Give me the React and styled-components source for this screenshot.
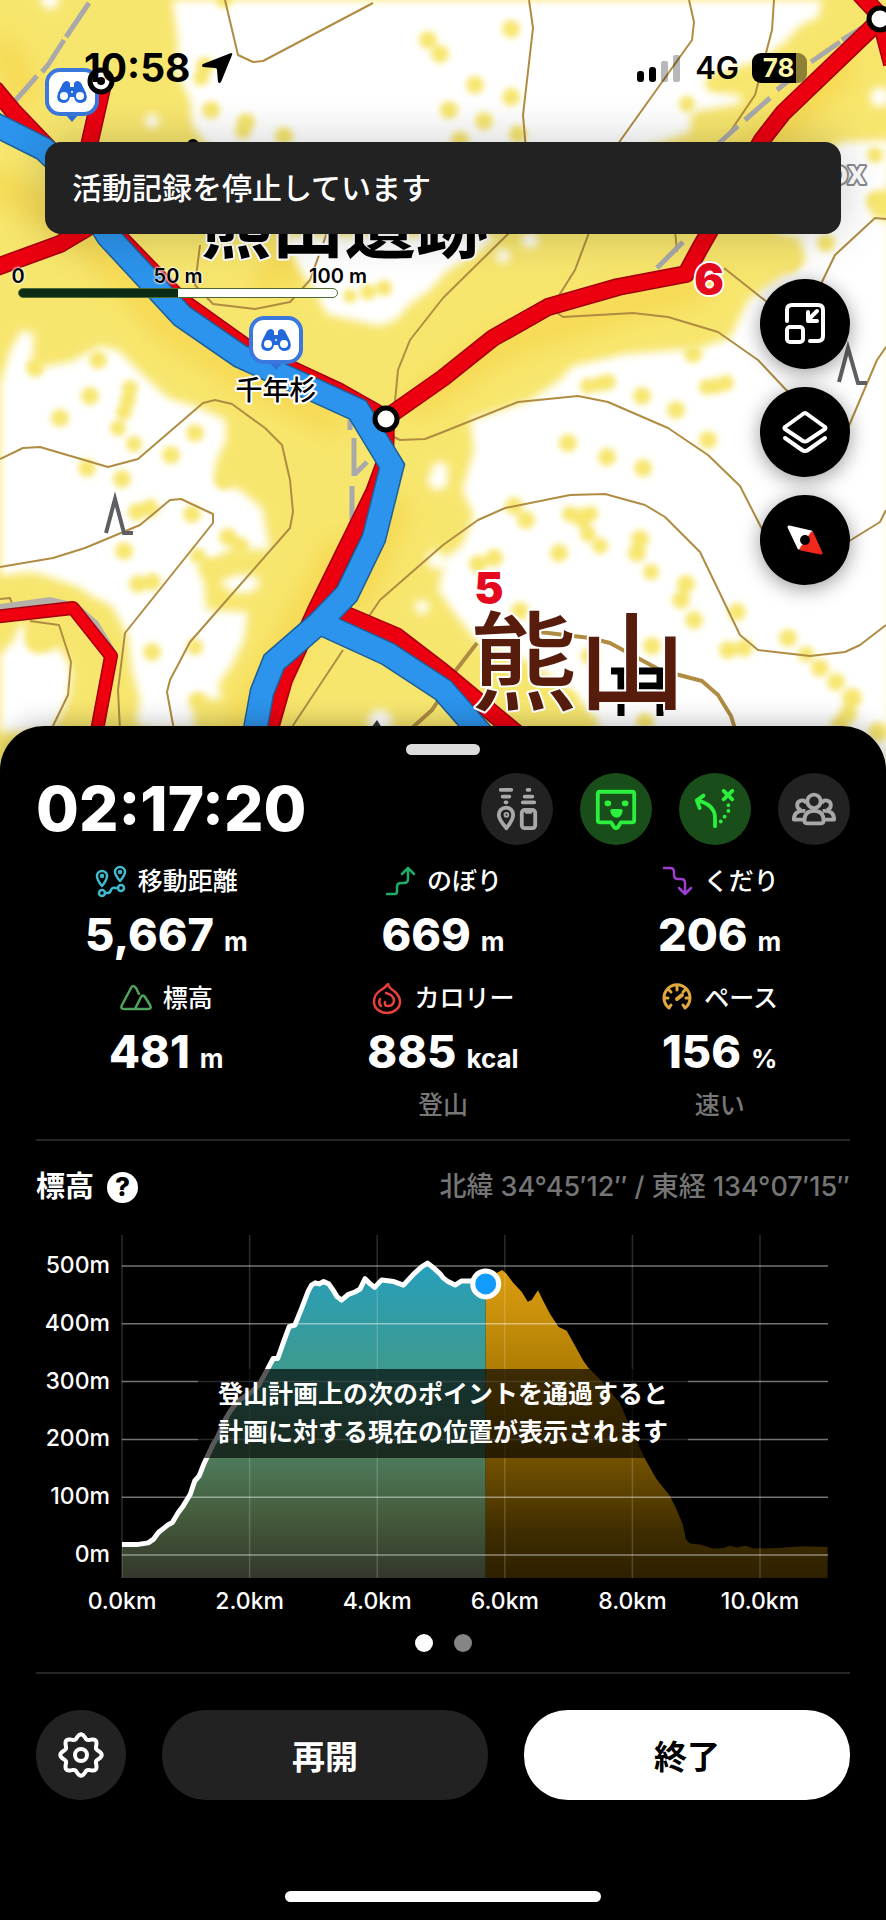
import React, { useState } from "react";
import styled, { createGlobalStyle } from "styled-components";

const GlobalStyle = createGlobalStyle`
  * {
    box-sizing: border-box;
  }
  body {
    margin: 0;
    background-color: #000;
    color: #fff;
    font-family: Inter, "Noto Sans CJK JP", sans-serif;
  }
  button {
    font-family: inherit;
    border: 0;
    padding: 0;
    cursor: pointer;
  }
`;

// elevation profile: [distance km, elevation m]
const walked = [
  [0, 18], [0.23, 18], [0.41, 21], [0.49, 27], [0.57, 39], [0.73, 53], [0.79, 56], [0.88, 73],
  [0.96, 85], [1.07, 105], [1.14, 128], [1.21, 137], [1.28, 157], [1.34, 171], [1.43, 192],
  [1.49, 203], [1.62, 235], [1.69, 248], [1.82, 267], [1.98, 278], [2.14, 293], [2.27, 319],
  [2.37, 340], [2.44, 340], [2.53, 368], [2.62, 395], [2.71, 398], [2.82, 428], [2.92, 457],
  [2.97, 467], [3.03, 471], [3.09, 469], [3.16, 473], [3.24, 469], [3.31, 458], [3.37, 447],
  [3.44, 441], [3.55, 451], [3.65, 455], [3.73, 460], [3.81, 478], [3.89, 469], [3.96, 463],
  [4.07, 476], [4.26, 473], [4.41, 467], [4.57, 486], [4.7, 499], [4.79, 505], [4.88, 497],
  [4.99, 486], [5.03, 480], [5.11, 473], [5.22, 467], [5.32, 474], [5.48, 474], [5.7, 469],
];
const planned = [
  [5.7, 471], [5.84, 486], [5.96, 493], [6.03, 486], [6.13, 471], [6.26, 456], [6.36, 438],
  [6.42, 441], [6.52, 458], [6.6, 440], [6.71, 417], [6.84, 395], [6.97, 388], [7.1, 362],
  [7.23, 336], [7.31, 324], [7.49, 304], [7.8, 264], [7.96, 223], [8.19, 168], [8.38, 131],
  [8.59, 102], [8.69, 79], [8.79, 53], [8.84, 27], [8.9, 20], [9.06, 18], [9.27, 11],
  [9.43, 12], [9.53, 16], [9.64, 13], [9.77, 16], [9.9, 11], [10.26, 12], [10.68, 15], [11.06, 14],
];

const chartLeft = 86;
const chartRight = 792;
const chartBottom = 344;
const toX = (km) => Math.round((chartLeft + km * 63.8) * 10) / 10;
const toY = (m) => Math.round((321 - m * 0.578) * 10) / 10;
const toLine = (points) => points.map(([km, m]) => `${toX(km)},${toY(m)}`).join(" L");
const toArea = (points) =>
  `M${toX(points[0][0])},${chartBottom} L${toLine(points)} L${toX(
    points[points.length - 1][0]
  )},${chartBottom} Z`;

const gearPath =
  Array.from({ length: 96 }, (_, i) => {
    const a = (i / 96) * Math.PI * 2;
    const r = 18.5 + 2.2 * Math.cos(a * 8);
    return `${i ? "L" : "M"}${(24 + r * Math.sin(a)).toFixed(1)} ${(24 - r * Math.cos(a)).toFixed(1)}`;
  }).join(" ") + " Z";

const contours = [
  "M225 0 238 55 253 62 263 61 373 3",
  "M529 0 533 28 523 115 526 150",
  "M689 0 694 22 692 40 615 148",
  "M774 0 772 30 755 95 730 132",
  "M200 245 195 285 213 304 255 309 290 302 310 280 328 230",
  "M512 230 443 298 410 340 398 370 394 412",
  "M590 230 575 270 558 297",
  "M556 312 563 317 633 313 668 317 718 332 758 360 790 394",
  "M675 230 677 252",
  "M724 268 772 306",
  "M886 219 875 218 835 255 820 286",
  "M394 437 400 440 425 439 443 432 518 402 578 396 608 402 668 428 708 455 740 486 765 535",
  "M886 347 877 360 848 428",
  "M290 730 343 650",
  "M365 622 380 600 443 545 478 520 505 508 570 495 605 494 645 505 665 517 700 552 740 635 758 650 810 656 845 652 860 645 886 625",
  "M886 510 880 522 846 543",
  "M0 459 23 448 40 447 108 467 138 459 203 403 215 400 232 404 265 428 282 445 290 480 293 512 290 528 190 642 170 680 167 692 174 730",
  "M0 567 53 558 85 548 140 525 170 500 181 499 213 514 213 523 125 633 118 690 120 730",
  "M0 599 10 598 13 606",
  "M30 621 59 625 71 662 68 695 50 732",
];

// bare ground patches on the forest layer
const clearings = [
  "M172 0 L178 40 176 70 190 100 192 125 210 150 640 150 690 132 692 112 740 104 742 96 706 90 706 78 760 60 785 42 802 24 818 18 822 0 Z",
  "M840 142 L890 140 890 186 868 200 872 216 890 222 890 770 604 770 598 720 570 690 530 662 480 645 452 610 438 590 446 558 462 545 474 515 462 490 474 450 470 420 530 400 560 380 572 366 625 354 700 348 730 338 748 300 776 280 806 262 800 238 776 232 790 180 Z",
  "M0 385 L10 350 22 330 34 334 32 368 70 362 100 346 118 350 140 372 168 398 200 408 226 420 226 440 216 462 214 480 240 490 262 508 270 550 232 548 196 568 204 580 206 610 248 612 244 640 232 665 218 684 222 700 190 696 196 730 150 730 136 724 140 700 132 670 128 636 112 606 92 596 76 586 40 574 28 572 0 576 Z",
  "M0 655 L14 640 22 620 28 640 44 652 60 648 72 670 68 700 52 732 0 732 Z",
  "M284 236 L498 236 478 252 446 272 430 290 410 304 396 320 380 326 352 320 326 314 316 292 300 270 Z",
  "M220 582 Q240 570 258 578 Q262 588 250 592 Q230 596 220 582 Z",
];
const whiteSpots = [
  [152, 121, 7], [422, 607, 7], [50, 0, 9], [880, 97, 10], [530, 240, 8], [503, 256, 7],
  [380, 722, 12], [20, 440, 8], [438, 480, 10], [436, 560, 9], [440, 470, 8],
];
const trees = [
  [211, 110, 9], [246, 122, 9], [243, 131, 8], [284, 136, 9], [205, 66, 9], [201, 78, 8],
  [428, 40, 9], [440, 54, 9], [511, 29, 9], [475, 85, 9], [511, 97, 9], [449, 110, 9],
  [484, 121, 9], [518, 134, 9], [460, 140, 9], [687, 104, 8], [718, 82, 8], [224, 0, 8],
  [35, 368, 9], [98, 360, 9], [90, 396, 9], [60, 418, 9], [130, 388, 8], [128, 400, 8],
  [124, 412, 8], [118, 428, 8], [134, 444, 8], [195, 433, 9], [171, 455, 9], [87, 468, 9],
  [122, 479, 9], [137, 512, 9], [150, 508, 9], [192, 514, 9], [224, 481, 9], [228, 537, 9],
  [240, 546, 9], [124, 551, 9], [138, 584, 9], [152, 582, 9], [198, 556, 8], [210, 566, 8],
  [152, 652, 9], [195, 647, 8], [38, 640, 13], [198, 700, 8], [588, 386, 8], [600, 384, 8],
  [608, 382, 8], [642, 396, 9], [676, 410, 9], [707, 387, 8], [716, 386, 8], [726, 383, 8],
  [708, 440, 9], [568, 443, 9], [607, 457, 9], [643, 468, 9], [693, 354, 9], [514, 506, 9],
  [526, 520, 9], [570, 514, 8], [582, 518, 10], [590, 514, 8], [588, 534, 8], [600, 546, 8],
  [559, 553, 9], [640, 539, 9], [637, 553, 9], [651, 572, 8], [478, 564, 9], [494, 558, 9],
  [520, 611, 9], [686, 584, 9], [681, 600, 9], [694, 620, 9], [737, 612, 9], [652, 646, 9],
  [728, 650, 9], [744, 648, 9], [788, 638, 9], [806, 654, 8], [820, 668, 9], [836, 682, 9],
  [852, 698, 10], [848, 714, 9], [840, 724, 9], [878, 732, 10], [645, 722, 9], [876, 200, 9],
  [875, 155, 8], [826, 243, 9], [790, 262, 10], [368, 292, 8], [384, 288, 8], [350, 296, 7],
  [590, 656, 9], [568, 700, 9],
];

const redRoutes = [
  "M-6 88 14 112 60 160 118 236 180 300 250 350 340 392 386 418",
  "M103 84 88 150 92 225 60 244 -6 268",
  "M386 418 443 378 493 338 548 307 618 287 686 274 700 248 762 140 783 113 882 18 858 -8",
  "M880 18 892 64",
  "M386 418 385 462 374 492 316 610 284 680 268 736",
  "M330 608 396 636 443 672 520 736",
];
const blueRoutes = [
  "M-6 124 44 149 72 176 108 236 182 316 240 356 358 410 392 466 374 538 347 594 320 622 274 662 262 692 254 736",
  "M318 622 388 654 443 690 492 746",
];

const BinocularPin = ({ x, y }) => (
  <g transform={`translate(${x} ${y})`}>
    <path d="M20 46h14l-7 8z" fill="#2e71da" />
    <rect x="2" y="2" width="50" height="44" rx="13" fill="#fff" stroke="#3a78dd" strokeWidth="4" />
    <path
      d="M18 15q4-4 7 0v4h4v-4q3-4 7 0l5 10q3 9-5 10-6 0-7-6h-4q-1 6-7 6-8-1-5-10z"
      fill="#2368dc"
    />
    <circle cx="19" cy="28" r="4" fill="#fff" />
    <circle cx="35" cy="28" r="4" fill="#fff" />
    <circle cx="27" cy="24" r="1" fill="#fff" />
  </g>
);

const MapDrawing = () => (
  <MapCanvas viewBox="0 0 886 770" preserveAspectRatio="xMidYMin slice" aria-hidden="true">
    <defs>
      <filter id="soft" x="-10%" y="-10%" width="120%" height="120%">
        <feGaussianBlur stdDeviation="4" />
      </filter>
      <filter id="spot" x="-10%" y="-10%" width="120%" height="120%">
        <feGaussianBlur stdDeviation="3" />
      </filter>
      <filter id="wide" x="-20%" y="-20%" width="140%" height="140%">
        <feGaussianBlur stdDeviation="14" />
      </filter>
    </defs>
    <rect width="886" height="770" fill="#f7e66e" />
    <g filter="url(#wide)" fill="none" stroke="#f6cf3c" strokeWidth="22" opacity="0.8">
      <path d="M-10 180 80 230 170 330 250 380 345 425" />
      <path d="M410 410 500 345 640 300 710 285" />
      <path d="M345 540 290 640 240 730M400 500 350 610" />
      <path d="M0 40 30 100M850 60 740 170" />
      <path d="M300 250 260 290" />
    </g>
    <g fill="#fff" filter="url(#soft)">
      {clearings.map((d) => (
        <path key={d} d={d} />
      ))}
      {whiteSpots.map(([cx, cy, r]) => (
        <circle key={`${cx}-${cy}`} cx={cx} cy={cy} r={r} />
      ))}
    </g>
    <g fill="#f7e66e" filter="url(#spot)">
      {trees.map(([cx, cy, r]) => (
        <circle key={`${cx}-${cy}`} cx={cx} cy={cy} r={r} />
      ))}
    </g>
    <g fill="none" stroke="#b08c42" strokeWidth="2" strokeLinejoin="round">
      {contours.map((d) => (
        <path key={d} d={d} />
      ))}
      <path d="M450 678 477 643M540 632 590 638 610 643 660 670 683 676 702 681 718 695 731 716 736 732" strokeWidth="4" />
      <path d="M440 698 432 710 412 728" strokeWidth="4" />
    </g>
    <g fill="none" stroke="#a9a9a9" strokeWidth="5">
      <path d="M89 3 66 37M64 40 48 65 42 72M37 76 15 101" />
      <path d="M862 28 842 40M840 42 811 62M803 69 777 90M770 98 745 120M738 126 718 144" />
      <path d="M683 242 657 268M350 420v10M354 438v38M352 486v38M355 474l12-12" />
      <path d="M0 608 50 601 75 607 95 624 112 652" stroke="#b5b0a8" strokeWidth="8" />
    </g>
    <g fill="none" strokeLinejoin="round">
      <path d="M-6 617 73 608 111 656 96 736" stroke="#a3000d" strokeWidth="14" />
      <path d="M-6 617 73 608 111 656 96 736" stroke="#f0000f" strokeWidth="11" />
      {redRoutes.map((d) => (
        <path key={d} d={d} stroke="#a3000d" strokeWidth="18" />
      ))}
      {redRoutes.map((d) => (
        <path key={d} d={d} stroke="#ec0010" strokeWidth="15" />
      ))}
      {blueRoutes.map((d) => (
        <path key={d} d={d} stroke="#1d5f96" strokeWidth="25" strokeLinejoin="miter" />
      ))}
      {blueRoutes.map((d) => (
        <path key={d} d={d} stroke="#2c94ec" strokeWidth="22" strokeLinejoin="miter" />
      ))}
    </g>
    <g fill="none" stroke="#5f5f63" strokeWidth="4">
      <path d="M106 533 115 499 124 533H133" />
      <path d="M839 382 848 348 858 383H867" />
    </g>
    <path d="M611 671h55M618 686h44M621 670v46M660 670v46" stroke="#000" strokeWidth="7" />
    <path d="M371 728l6-8 5 8z" fill="#333" />
    <g stroke="#000" strokeWidth="5" fill="#fff">
      <circle cx="386" cy="419" r="11" />
      <circle cx="880" cy="19" r="11" />
    </g>
    <BinocularPin x={45} y={68} />
    <circle cx="101" cy="81" r="11" fill="#fff" stroke="#000" strokeWidth="5" />
    <circle cx="101" cy="81" r="4" />
    <BinocularPin x={249} y={316} />
    <circle cx="193" cy="145" r="6" />
    <MapLabel x="344" y="252" $size={72} $weight={700}>熊山遺跡</MapLabel>
    <MapLabel x="276" y="400" $size={27} $weight={500}>千年杉</MapLabel>
    <MapLabel x="709" y="295" $size={44} $weight={900} $color="#e60a1e">6</MapLabel>
    <MapLabel x="489" y="604" $size={44} $weight={900} $color="#e60a1e">5</MapLabel>
    <MapLabel x="578" y="702" $size={108} $weight={500} $color="#571c0c">熊山</MapLabel>
    <MapLabel x="866" y="184" $size={32} $weight={700} $color="#fff" $halo="#8b8b90">mapbox</MapLabel>
  </MapCanvas>
);

const tools = [
  {
    label: "地図を縮小",
    icon: (
      <g fill="none" stroke="#fff" strokeWidth="4" strokeLinecap="round" strokeLinejoin="round">
        <path d="M6 21V10q0-5 5-5h26q5 0 5 5v26q0 5-5 5H29" />
        <rect x="6" y="27" width="16" height="15" rx="3" />
        <path d="M36 11l-9 9M27 12v9h9" />
      </g>
    ),
  },
  {
    label: "レイヤー",
    icon: (
      <g fill="none" stroke="#fff" strokeWidth="4" strokeLinecap="round" strokeLinejoin="round">
        <path d="M22 6q2-2 4 0l18 13q1 1 0 2L26 33q-2 1-4 0L4 21q-1-1 0-2z" />
        <path d="M4 30l17 12q3 2 6 0l17-12" />
      </g>
    ),
  },
  {
    label: "コンパス",
    icon: (
      <g strokeWidth="3" strokeLinejoin="round">
        <path d="M30 16 8 11 18 32z" fill="#fff" stroke="#fff" />
        <path d="M31 17 40 37 20 33z" fill="#f2281c" stroke="#f2281c" />
        <circle cx="24" cy="24" r="5" />
      </g>
    ),
  },
];

const shortcuts = [
  {
    label: "持ち物",
    icon: (
      <g fill="none" stroke="currentColor" strokeWidth="4" strokeLinecap="round" strokeLinejoin="round">
        <path d="M8 4h11M10 11h7M13 17h1M36 4h2M33 11h8M31 17h12" />
        <path d="M14 44q-8-9-8-14a7 7 0 0 1 15 0q0 5-7 14z" />
        <circle cx="14" cy="30" r="1" />
        <rect x="30" y="25" width="14" height="19" rx="3" />
        <path d="M35 27h4" />
      </g>
    ),
  },
  {
    label: "みまもり",
    active: true,
    icon: (
      <g fill="none" stroke="currentColor" strokeWidth="4" strokeLinecap="round" strokeLinejoin="round">
        <path d="M8 6h34q2 0 2 2v28q0 2-2 2H30l-3 5q-2 2-4 0l-3-5H8q-2 0-2-2V8q0-2 2-2z" />
        <path d="M16 18h1M34 18h1" strokeWidth="6" />
        <path d="M21 26h9q-1 5-4 5-4 0-5-5z" fill="currentColor" />
      </g>
    ),
  },
  {
    label: "ルート逸脱",
    active: true,
    icon: (
      <g fill="none" stroke="currentColor" strokeWidth="4" strokeLinecap="round">
        <path d="M25 42V33Q25 20 7 15M13 10 6 15l3 8" strokeLinejoin="round" />
        <path d="M34 5l9 9M43 5l-9 9" />
        <path d="M39 20h0M39 26h0M35 32h0M31 37h0" />
      </g>
    ),
  },
  {
    label: "メンバー",
    icon: (
      <g fill="none" stroke="currentColor" strokeWidth="4">
        <circle cx="25" cy="16" r="7" />
        <path d="M15 36q0-10 10-10t10 10q0 3-3 3H18q-3 0-3-3z" />
        <path d="M17 18a5 5 0 1 0-5 7M33 18a5 5 0 1 1 5 7" />
        <path d="M16 26q-12-1-12 9h10M34 26q12-1 12 9H36" strokeLinejoin="round" />
      </g>
    ),
  },
];

const stats = [
  {
    label: "移動距離",
    value: "5,667",
    unit: "m",
    color: "#41b9cf",
    icon: (
      <>
        <path d="M7 21Q2 15 2 11a5 5 0 0 1 10 0q0 4-5 10zM25 16q-5-6-5-9a5 5 0 0 1 10 0q0 3-5 9z" />
        <circle cx="7" cy="11" r="1" />
        <circle cx="25" cy="7" r="1" />
        <circle cx="7" cy="28" r="3" />
        <circle cx="26" cy="23" r="3" />
        <path d="M10 28h3q2 0 3-3t4-2h3" />
      </>
    ),
  },
  {
    label: "のぼり",
    value: "669",
    unit: "m",
    color: "#1fae6a",
    icon: <path d="M3 29h8q2 0 2-3v-4q0-4 4-4h3q4 0 4-4V4M18 9l6-6 6 6" />,
  },
  {
    label: "くだり",
    value: "206",
    unit: "m",
    color: "#9c3fd0",
    icon: <path d="M3 3h6q4 0 4 4v3q0 4 4 4h3q4 0 4 4v11M18 23l6 6 6-6" />,
  },
  {
    label: "標高",
    value: "481",
    unit: "m",
    color: "#4fa35c",
    icon: (
      <path d="M15 27H4q-4 0-2-4L11 6q2-4 5 0l3 6M15 27l6-12q2-3 4 0l5 8q2 4-2 4H15" />
    ),
  },
  {
    label: "カロリー",
    value: "885",
    unit: "kcal",
    note: "登山",
    color: "#e8403a",
    icon: (
      <>
        <path d="M17 2Q18 6 23 9 29 14 29 20A13 11 0 0 1 3 20Q3 12 10 8 15 5 17 2Z" />
        <path d="M15 11q8 2 8 8-1 5-6 5-4 0-3-4M9 17q-2 4 1 7" />
      </>
    ),
  },
  {
    label: "ペース",
    value: "156",
    unit: "%",
    note: "速い",
    color: "#e0a83e",
    icon: (
      <>
        <path d="M8 26a13 13 0 1 1 16 0M8 26l2-3M24 26l-2-3" strokeWidth="3" />
        <path d="M16 4v4M8 8l2 2M24 8l-2 2M4 16h3M28 16h-3" strokeWidth="3" />
        <path d="M16 17l5-4" strokeWidth="4" />
      </>
    ),
  },
];

const StatItem = ({ item }) => (
  <Stat>
    <StatLabel>
      <svg
        width="32"
        height="32"
        viewBox="0 0 32 32"
        fill="none"
        stroke={item.color}
        strokeWidth="2.5"
        strokeLinecap="round"
        strokeLinejoin="round"
      >
        {item.icon}
      </svg>
      {item.label}
    </StatLabel>
    <StatValue>
      {item.value}
      <Unit>{item.unit}</Unit>
    </StatValue>
    {item.note && <Note>{item.note}</Note>}
  </Stat>
);

const ElevationChart = () => (
  <ChartWrap>
    <ChartSvg viewBox="0 0 814 396" role="img" aria-label="標高グラフ">
      <defs>
        <linearGradient id="walkedFill" gradientUnits="userSpaceOnUse" x1="0" y1="30" x2="0" y2="344">
          <stop offset="0" stopColor="#279fbb" />
          <stop offset="0.33" stopColor="#3d9a8f" />
          <stop offset="0.62" stopColor="#4d7a5b" />
          <stop offset="0.8" stopColor="#455c3c" />
          <stop offset="1" stopColor="#33372b" />
        </linearGradient>
        <linearGradient id="planFill" gradientUnits="userSpaceOnUse" x1="0" y1="30" x2="0" y2="344">
          <stop offset="0" stopColor="#dfa011" />
          <stop offset="0.33" stopColor="#b07e04" />
          <stop offset="0.62" stopColor="#745200" />
          <stop offset="0.85" stopColor="#3f2d00" />
          <stop offset="1" stopColor="#2e2000" />
        </linearGradient>
      </defs>
      <path d={toArea(walked)} fill="url(#walkedFill)" />
      <path d={toArea(planned)} fill="url(#planFill)" />
      {[500, 400, 300, 200, 100, 0].map((m) => (
        <g key={m}>
          <path d={`M${chartLeft} ${toY(m)}H${chartRight}`} stroke="#fff" strokeOpacity="0.45" strokeWidth="1.5" />
          <AxisText x="74" y={toY(m) + 7} textAnchor="end">
            {m}m
          </AxisText>
        </g>
      ))}
      {[0, 2, 4, 6, 8, 10].map((km) => (
        <g key={km}>
          <path d={`M${toX(km)} 1V${chartBottom}`} stroke="#fff" strokeOpacity="0.17" strokeWidth="1.5" />
          <AxisText x={toX(km)} y="375" textAnchor="middle">
            {km.toFixed(1)}km
          </AxisText>
        </g>
      ))}
      <path d={`M${toLine(walked)}`} fill="none" stroke="#fff" strokeWidth="5" strokeLinejoin="round" />
      <circle cx={toX(5.7)} cy={toY(469)} r="13" fill="#129bfb" stroke="#fff" strokeWidth="5" />
    </ChartSvg>
    <ChartMessage>
      登山計画上の次のポイントを通過すると
      <br />
      計画に対する現在の位置が表示されます
    </ChartMessage>
  </ChartWrap>
);

export default function App() {
  const [page, setPage] = useState(0);

  return (
    <Screen>
      <GlobalStyle />
      <MapArea>
        <MapDrawing />
        <MapOverlay>
          <StatusBar>
            <Clock>
              10:58
              <svg width="34" height="34" viewBox="0 0 34 34">
                <path d="M31 2q2 0 1 2L21 31q-2 2-3 0l-1-12q0-2-2-2L3 16q-2-1 0-3z" />
              </svg>
            </Clock>
            <Signals>
              <svg width="46" height="30" viewBox="0 0 46 30">
                <rect x="1" y="18" width="7" height="11" rx="3" />
                <rect x="13" y="14" width="7" height="15" rx="3" />
                <rect x="25" y="8" width="7" height="21" rx="2" opacity="0.28" />
                <rect x="37" y="2" width="7" height="27" rx="2" opacity="0.28" />
              </svg>
              4G
              <Battery>78</Battery>
            </Signals>
          </StatusBar>
          <Toast role="status">活動記録を停止しています</Toast>
          <MapTools>
            <Scale>
              <ScaleLabels>
                <span>0</span>
                <span>50 m</span>
                <span>100 m</span>
              </ScaleLabels>
              <ScaleBar />
            </Scale>
            <ToolColumn>
              {tools.map((tool) => (
                <ToolButton key={tool.label} aria-label={tool.label}>
                  <svg width="48" height="48" viewBox="0 0 48 48">
                    {tool.icon}
                  </svg>
                </ToolButton>
              ))}
            </ToolColumn>
          </MapTools>
        </MapOverlay>
      </MapArea>
      <Sheet>
        <Handle />
        <TimerRow>
          <Timer>02:17:20</Timer>
          <Shortcuts>
            {shortcuts.map((item) => (
              <Shortcut key={item.label} aria-label={item.label} $active={item.active}>
                <svg width="48" height="46" viewBox="0 0 50 48">
                  {item.icon}
                </svg>
              </Shortcut>
            ))}
          </Shortcuts>
        </TimerRow>
        <StatGrid>
          {stats.map((item) => (
            <StatItem key={item.label} item={item} />
          ))}
        </StatGrid>
        <Divider />
        <ChartHeader>
          <ChartTitle>
            標高
            <HelpButton aria-label="ヘルプ">?</HelpButton>
          </ChartTitle>
          <Position>北緯 34°45′12″ / 東経 134°07′15″</Position>
        </ChartHeader>
        <ElevationChart />
        <Dots>
          {[0, 1].map((i) => (
            <Dot key={i} aria-label={`${i + 1}`} $active={page === i} onClick={() => setPage(i)} />
          ))}
        </Dots>
        <Divider />
        <Actions>
          <SettingsButton aria-label="設定">
            <svg width="48" height="48" viewBox="0 0 48 48" fill="none" stroke="#fff" strokeWidth="4">
              <path d={gearPath} strokeLinejoin="round" />
              <circle cx="24" cy="24" r="6" />
            </svg>
          </SettingsButton>
          <ActionButton>再開</ActionButton>
          <ActionButton $primary>終了</ActionButton>
        </Actions>
        <HomeIndicator />
      </Sheet>
    </Screen>
  );
}

const Screen = styled.div`
  display: flex;
  flex-direction: column;
  min-height: 100vh;
`;
const MapArea = styled.section`
  position: relative;
  min-height: 770px;
  overflow: hidden;
  color: #000;
`;
const MapCanvas = styled.svg`
  position: absolute;
  inset: 0;
  width: 100%;
  height: 100%;
`;
const MapLabel = styled.text`
  font-family: Inter, "Noto Sans CJK JP", sans-serif;
  font-size: ${({ $size }) => $size}px;
  font-weight: ${({ $weight }) => $weight};
  fill: ${({ $color }) => $color || "#000"};
  stroke: ${({ $halo }) => $halo || "#fff"};
  stroke-width: 4px;
  stroke-linejoin: round;
  paint-order: stroke;
  text-anchor: ${({ $halo }) => ($halo ? "end" : "middle")};
`;
const MapOverlay = styled.div`
  position: relative;
`;
const StatusBar = styled.header`
  display: flex;
  justify-content: space-between;
  align-items: center;
  padding: 46px 79px 52px 84px;
  height: 142px;
`;
const Clock = styled.div`
  display: flex;
  align-items: center;
  gap: 10px;
  font-size: 39px;
  line-height: 44px;
  font-weight: 700;
`;
const Signals = styled.div`
  display: flex;
  align-items: center;
  gap: 13px;
  font-size: 31px;
  line-height: 44px;
  font-weight: 600;
`;
const Battery = styled.span`
  width: 55px;
  height: 30px;
  padding-right: 2px;
  border-radius: 9px;
  background: linear-gradient(90deg, #000 44px, #8d8138 44px);
  color: #fff7a8;
  font-size: 26px;
  line-height: 30px;
  font-weight: 700;
  text-align: center;
`;
const Toast = styled.div`
  margin: 0 45px;
  padding: 24px 27px;
  border-radius: 16px;
  background-color: #222;
  box-shadow: 0 0 48px rgba(0, 0, 0, 0.2);
  color: #fff;
  font-size: 30px;
  line-height: 44px;
  font-weight: 500;
`;
const MapTools = styled.div`
  display: flex;
  justify-content: space-between;
  padding: 30px 36px 0 18px;
`;
const Scale = styled.div`
  width: 320px;
`;
const ScaleLabels = styled.div`
  display: flex;
  justify-content: space-between;
  font-size: 20px;
  line-height: 24px;
  font-weight: 600;
  text-shadow: 0 0 2px #fff, 0 0 2px #fff, 0 0 3px #fff;
  span {
    display: flex;
    justify-content: center;
    width: 0;
    white-space: nowrap;
  }
`;
const ScaleBar = styled.div`
  height: 10px;
  border: 1px solid #4d6a35;
  border-radius: 5px;
  background: linear-gradient(90deg, #0c2c14 50%, #fff 50%);
`;
const ToolColumn = styled.div`
  display: flex;
  flex-direction: column;
  gap: 18px;
  padding-top: 15px;
`;
const RoundButton = styled.button`
  display: flex;
  align-items: center;
  justify-content: center;
  flex: none;
  border-radius: 50%;
`;
const ToolButton = styled(RoundButton)`
  width: 90px;
  height: 90px;
  background-color: #000;
  box-shadow: 0 4px 20px rgba(0, 0, 0, 0.4);
`;
const Sheet = styled.main`
  position: relative;
  display: flex;
  flex-direction: column;
  flex: 1;
  margin-top: -44px;
  padding: 18px 36px;
  border-radius: 44px 44px 0 0;
  background-color: #000;
  box-shadow: 0 0 28px rgba(0, 0, 0, 0.3);
`;
const Handle = styled.div`
  width: 74px;
  height: 11px;
  margin: 0 auto;
  border-radius: 6px;
  background-color: #dcdcdc;
`;
const TimerRow = styled.div`
  display: flex;
  justify-content: space-between;
  align-items: center;
  margin-top: 18px;
`;
const Timer = styled.div`
  font-size: 62px;
  line-height: 72px;
  font-weight: 800;
`;
const Shortcuts = styled.div`
  display: flex;
  gap: 27px;
`;
const Shortcut = styled(RoundButton)`
  width: 72px;
  height: 72px;
  background-color: ${({ $active }) => ($active ? "#194d1a" : "#222")};
  color: ${({ $active }) => ($active ? "#2bef3c" : "#a8a8a8")};
`;
const StatGrid = styled.div`
  display: grid;
  grid-template-columns: repeat(3, 1fr);
  gap: 1px 16px;
  margin-top: 16px;
`;
const Stat = styled.div`
  display: flex;
  flex-direction: column;
  align-items: center;
  min-height: 116px;
`;
const StatLabel = styled.div`
  display: flex;
  align-items: center;
  gap: 11px;
  font-size: 25px;
  line-height: 40px;
  font-weight: 500;
`;
const StatValue = styled.div`
  margin-top: 7px;
  font-size: 45px;
  line-height: 54px;
  font-weight: 800;
`;
const Unit = styled.span`
  margin-left: 10px;
  font-size: 26px;
  font-weight: 700;
`;
const Note = styled.div`
  margin-top: 1px;
  color: #777;
  font-size: 25px;
  line-height: 36px;
  font-weight: 500;
`;
const Divider = styled.hr`
  width: 100%;
  height: 2px;
  margin: 16px 0 0;
  border: 0;
  background-color: #272727;
`;
const ChartHeader = styled.div`
  display: flex;
  justify-content: space-between;
  align-items: center;
  margin-top: 24px;
`;
const ChartTitle = styled.h2`
  display: flex;
  align-items: center;
  gap: 13px;
  margin: 0;
  font-size: 29px;
  line-height: 44px;
  font-weight: 700;
`;
const HelpButton = styled(RoundButton)`
  width: 31px;
  height: 31px;
  background-color: #fff;
  color: #000;
  font-size: 26px;
  line-height: 30px;
  font-weight: 800;
`;
const Position = styled.div`
  color: #757575;
  font-size: 27px;
  line-height: 44px;
  font-weight: 500;
`;
const ChartWrap = styled.div`
  position: relative;
  margin-top: 25px;
`;
const ChartSvg = styled.svg`
  display: block;
  width: 100%;
`;
const AxisText = styled.text`
  fill: #fff;
  font-size: 23px;
  font-weight: 500;
`;
const ChartMessage = styled.div`
  position: absolute;
  top: 34%;
  left: 50%;
  transform: translateX(-50%);
  padding: 6px 20px 7px;
  background-color: rgba(0, 0, 0, 0.65);
  font-size: 25px;
  line-height: 38px;
  font-weight: 700;
  white-space: nowrap;
`;
const Dots = styled.div`
  display: flex;
  justify-content: center;
  gap: 21px;
  margin: 4px 0;
`;
const Dot = styled.button`
  width: 18px;
  height: 18px;
  border-radius: 50%;
  background-color: ${({ $active }) => ($active ? "#fff" : "#858585")};
`;
const Actions = styled.div`
  display: flex;
  gap: 36px;
  margin-top: 36px;
`;
const SettingsButton = styled(RoundButton)`
  width: 90px;
  height: 90px;
  background-color: #222;
`;
const ActionButton = styled.button`
  flex: 1;
  height: 90px;
  border-radius: 44px;
  background-color: ${({ $primary }) => ($primary ? "#fff" : "#222")};
  color: ${({ $primary }) => ($primary ? "#000" : "#fff")};
  font-size: 33px;
  font-weight: 700;
`;
const HomeIndicator = styled.div`
  width: 316px;
  height: 11px;
  margin: auto auto 0;
  border-radius: 6px;
  background-color: #fff;
`;
